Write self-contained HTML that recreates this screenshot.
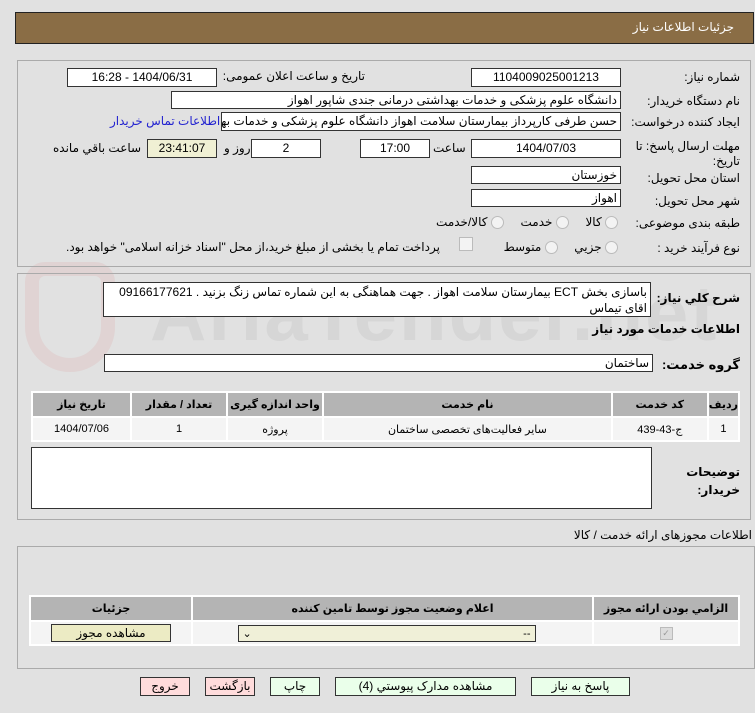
<!DOCTYPE html>
<html><head><meta charset="utf-8"><style>
body{margin:0;width:755px;height:713px;background:#e1e1e1;font-family:"Liberation Sans","DejaVu Sans",sans-serif;font-size:12px;color:#000;position:relative;overflow:hidden;direction:rtl}
.a{position:absolute;white-space:nowrap}
.box{position:absolute;background:#fff;border:1px solid #333;box-sizing:border-box;font-size:12px;line-height:16px;padding:0 3px;white-space:nowrap;overflow:hidden}
.panel{position:absolute;border:1px solid #aaa;box-sizing:border-box}
.lbl{position:absolute;font-size:12px;white-space:nowrap}
table{border-collapse:separate;border-spacing:2px;position:absolute;font-size:11px;background:#fff}
th{background:#b4b4b4;font-weight:bold;height:23px;white-space:nowrap;padding:0}
td{background:#f4f4f4;text-align:center;height:22px;padding:0;white-space:nowrap}
.btn{position:absolute;height:19px;border:1px solid #333;box-sizing:border-box;text-align:center;font-size:12px;line-height:17px;background:#eaffea}
.rad{display:inline-block;width:11px;height:11px;border:1px solid #bbb;border-radius:50%;background:#f3f3f3;vertical-align:middle}
</style></head><body>
<div class="a" style="left:15px;top:12px;width:739px;height:32px;background:#8a6d45;border:1px solid #222;box-sizing:border-box"></div>
<div class="a" style="right:21px;top:20px;color:#fff;font-size:12px">جزئیات اطلاعات نیاز</div>

<div class="a" style="left:150px;top:268px;font-size:78px;font-weight:bold;color:rgba(170,170,170,.2);direction:ltr;letter-spacing:2px">AriaTender.net</div>
<div class="a" style="left:25px;top:262px;width:90px;height:110px;border:14px solid rgba(220,150,150,.18);border-radius:20px 20px 45px 45px;box-sizing:border-box"></div>

<div class="panel" style="left:17px;top:60px;width:734px;height:207px"></div>
<div class="lbl" style="right:15px;top:70px">شماره نیاز:</div>
<div class="box" style="left:471px;top:68px;width:150px;height:19px;text-align:center">1104009025001213</div>
<div class="lbl" style="right:390px;top:69px">تاریخ و ساعت اعلان عمومی:</div>
<div class="box" style="left:67px;top:68px;width:150px;height:19px;text-align:center">1404/06/31 - 16:28</div>
<div class="lbl" style="right:15px;top:94px">نام دستگاه خریدار:</div>
<div class="box" style="left:171px;top:91px;width:450px;height:18px">دانشگاه علوم پزشکی و خدمات بهداشتی درمانی جندی شاپور اهواز</div>
<div class="lbl" style="right:15px;top:115px">ایجاد کننده درخواست:</div>
<div class="box" style="left:221px;top:112px;width:400px;height:19px">حسن طرفی کارپرداز بیمارستان سلامت اهواز دانشگاه علوم پزشکی و خدمات بهداشتی</div>
<div class="lbl" style="left:110px;top:114px;color:#2323d0">اطلاعات تماس خریدار</div>
<div class="lbl" style="right:15px;top:138px;line-height:16px">مهلت ارسال پاسخ: تا</div>
<div class="lbl" style="right:15px;top:153px;line-height:16px">تاریخ:</div>
<div class="box" style="left:471px;top:139px;width:150px;height:19px;text-align:center">1404/07/03</div>
<div class="lbl" style="left:433px;top:141px">ساعت</div>
<div class="box" style="left:360px;top:139px;width:70px;height:19px;text-align:center">17:00</div>
<div class="box" style="left:251px;top:139px;width:70px;height:19px;text-align:center">2</div>
<div class="lbl" style="left:224px;top:141px">روز و</div>
<div class="box" style="left:147px;top:139px;width:70px;height:19px;text-align:center;background:#f0f0d4">23:41:07</div>
<div class="lbl" style="left:53px;top:141px">ساعت باقي مانده</div>
<div class="lbl" style="right:15px;top:171px">استان محل تحویل:</div>
<div class="box" style="left:471px;top:166px;width:150px;height:18px">خوزستان</div>
<div class="lbl" style="right:15px;top:194px">شهر محل تحویل:</div>
<div class="box" style="left:471px;top:189px;width:150px;height:18px">اهواز</div>
<div class="lbl" style="right:15px;top:216px">طبقه بندی موضوعی:</div>
<div class="lbl" style="right:137px;top:215px"><span class="rad"></span> کالا &nbsp;&nbsp;&nbsp; <span class="rad"></span> خدمت &nbsp;&nbsp;&nbsp; <span class="rad"></span> کالا/خدمت</div>
<div class="lbl" style="right:15px;top:241px">نوع فرآیند خرید :</div>
<div class="lbl" style="right:137px;top:240px"><span class="rad"></span> جزیي &nbsp;&nbsp;&nbsp; <span class="rad"></span> متوسط</div>
<div class="a" style="left:459px;top:237px;width:12px;height:12px;border:1px solid #bbb;background:#f3f3f3"></div>
<div class="lbl" style="left:66px;top:240px">پرداخت تمام یا بخشی از مبلغ خرید،از محل "اسناد خزانه اسلامی" خواهد بود.</div>

<div class="panel" style="left:17px;top:273px;width:734px;height:247px"></div>
<div class="lbl" style="right:15px;top:291px;font-weight:bold">شرح کلي نیاز:</div>
<div class="box" style="left:103px;top:282px;width:548px;height:35px;white-space:normal;line-height:16px;padding-top:1px">باسازی بخش ECT بیمارستان سلامت اهواز . جهت هماهنگی به این شماره تماس زنگ بزنید . 09166177621 اقای تیماس</div>
<div class="lbl" style="right:15px;top:322px;font-weight:bold">اطلاعات خدمات مورد نیاز</div>
<div class="lbl" style="right:15px;top:357px;font-weight:bold;font-size:13px">گروه خدمت:</div>
<div class="box" style="left:104px;top:354px;width:549px;height:18px">ساختمان</div>
<table style="left:31px;top:391px;width:709px"><tr><th style="width:28px">ردیف</th><th style="width:94px">کد خدمت</th><th>نام خدمت</th><th style="width:94px">واحد اندازه گیری</th><th style="width:94px">تعداد / مقدار</th><th style="width:97px">تاریخ نیاز</th></tr>
<tr><td>1</td><td>ج-43-439</td><td>سایر فعالیت‌های تخصصی ساختمان</td><td>پروژه</td><td>1</td><td>1404/07/06</td></tr></table>
<div class="lbl" style="right:15px;top:463px;font-weight:bold;line-height:18px">توضیحات<br>خریدار:</div>
<div class="box" style="left:31px;top:447px;width:621px;height:62px"></div>

<div class="lbl" style="right:3px;top:528px">اطلاعات مجوزهای ارائه خدمت / کالا</div>
<div class="panel" style="left:17px;top:546px;width:738px;height:123px"></div>
<table style="left:29px;top:595px;width:711px"><tr><th style="width:144px">الزامي بودن ارائه مجوز</th><th>اعلام وضعیت مجوز توسط تامین کننده</th><th style="width:160px">جزئیات</th></tr>
<tr><td><span style="display:inline-block;width:11px;height:11px;border:1px solid #bbb;background:#ddd;font-size:9px;line-height:11px;color:#999">✓</span></td><td><div style="margin:0 auto;width:298px;height:17px;border:1px solid #333;background:#f0f0d8;text-align:right;direction:ltr;font-size:11px;line-height:16px;padding:0 4px;box-sizing:border-box;position:relative;left:-6px"><span style="float:left">⌄</span><span style="float:right">--</span></div></td><td><div style="margin:0 auto;width:120px;height:18px;border:1px solid #333;background:#ecebc4;font-size:12px;line-height:17px;box-sizing:border-box">مشاهده مجوز</div></td></tr></table>

<div class="btn" style="left:531px;top:677px;width:99px">پاسخ به نیاز</div>
<div class="btn" style="left:335px;top:677px;width:181px">مشاهده مدارک پیوستي (4)</div>
<div class="btn" style="left:270px;top:677px;width:50px">چاپ</div>
<div class="btn" style="left:205px;top:677px;width:50px;background:#ffdcdc">بازگشت</div>
<div class="btn" style="left:140px;top:677px;width:50px;background:#ffdcdc">خروج</div>
</body></html>
